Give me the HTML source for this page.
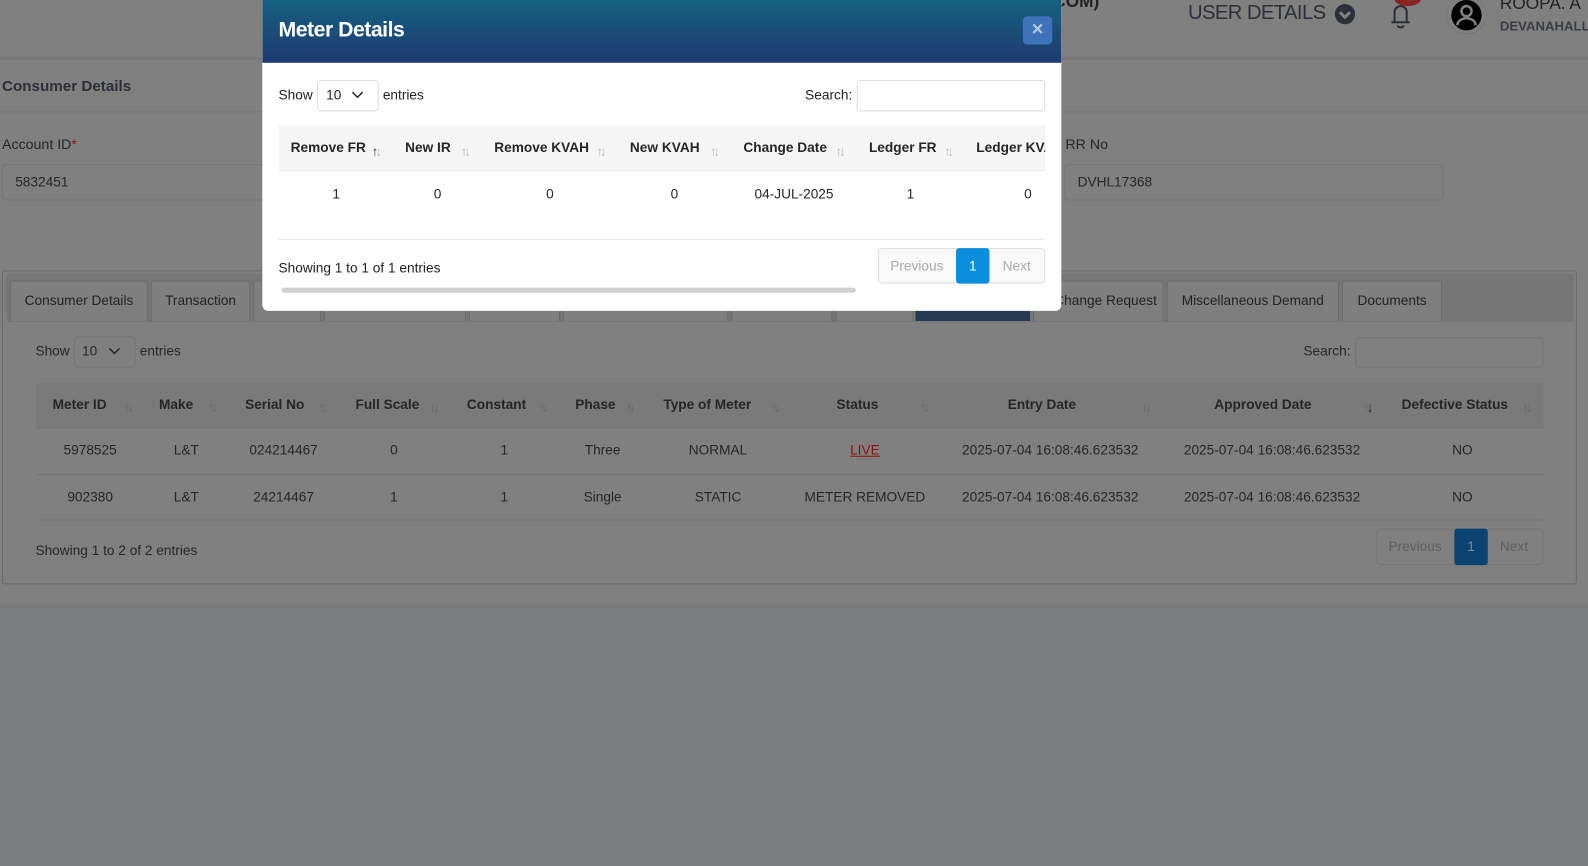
<!DOCTYPE html>
<html><head><meta charset="utf-8"><style>
*{box-sizing:border-box;margin:0;padding:0}
html,body{width:1588px;height:866px;overflow:hidden;background:#7a7b7d;font-family:"Liberation Sans",sans-serif;font-size:13.5px;color:#262626}
#w{position:absolute;left:0;top:0;width:1568px;height:855px;transform:scale(1.01276);transform-origin:0 0}
.a{position:absolute;white-space:nowrap}
.c{position:absolute;text-align:center;white-space:nowrap}
.b{font-weight:bold}
.inp{position:absolute;border:1px solid #747474;border-radius:4px}
.tab{position:absolute;top:277px;height:40px;border:1px solid #6a6a6a;border-bottom:none;border-radius:3px 3px 0 0;background:#7f7f7f;line-height:38px;text-align:center;color:#232323}
.s{position:absolute;font-size:13px;color:#6a6a6a;letter-spacing:-3px}
.ms{position:absolute;font-size:13px;color:#bbb;letter-spacing:-3px}
</style></head><body><div id="w">
<div class="a" style="left:0;top:0;width:1568px;height:598px;background:#808080"></div>
<div class="a" style="left:0;top:57px;width:1568px;height:2px;background:#767676"></div>
<div class="a" style="left:0;top:110px;width:1568px;height:1px;background:#777"></div>
<div class="a" style="left:0;top:596px;width:1568px;height:3px;background:#7c7c7c"></div>
<div class="a b" style="left:1040px;top:-8px;font-size:17px;color:#222">COM)</div>
<div class="a" style="left:1173px;top:2px;font-size:20px;letter-spacing:-0.6px;color:#2d2f36">USER DETAILS</div>
<div class="a" style="left:1318px;top:4px;width:20px;height:20px;border-radius:50%;background:#2d2f36"><svg width="20" height="20"><path d="M5 8l5 5 5-5" stroke="#808080" stroke-width="3" fill="none"/></svg></div>
<svg class="a" style="left:1368px;top:0" width="30" height="30"><path d="M6 22h18M9 22V12a6 6 0 0 1 12 0v10M12 25a3 2 0 0 0 6 0" stroke="#2d2f36" stroke-width="2" fill="none"/></svg>
<div class="a" style="left:1377px;top:-8px;width:26px;height:14px;border-radius:50%;background:#8a2424"></div>
<div class="a" style="left:1428px;top:-4px;width:40px;height:38px;border-radius:50%;border:1px solid #777"></div>
<svg class="a" style="left:1432px;top:-1px" width="32" height="32"><circle cx="16" cy="16" r="15" fill="#000"/><circle cx="16" cy="12" r="5" stroke="#808080" stroke-width="2.5" fill="none"/><path d="M7 26a9 7 0 0 1 18 0" stroke="#808080" stroke-width="2.5" fill="none"/></svg>
<div class="a" style="left:1481px;top:-6px;font-size:17px;color:#222">ROOPA. A</div>
<div class="a b" style="left:1481px;top:18px;font-size:13px;color:#3a3c44">DEVANAHALLI</div>
<div class="a b" style="left:2px;top:77px;font-size:15px;color:#2d2f36">Consumer Details</div>
<div class="a" style="left:2px;top:134px;font-size:14px">Account ID<span style="color:#8a1010">*</span></div>
<div class="inp" style="left:2px;top:162px;width:270px;height:36px"></div>
<div class="a" style="left:15px;top:172px">5832451</div>
<div class="a" style="left:1052px;top:134px;font-size:14px">RR No</div>
<div class="inp" style="left:1051px;top:162px;width:374px;height:36px"></div>
<div class="a" style="left:1064px;top:172px">DVHL17368</div>
<div class="a" style="left:2px;top:267px;width:1555px;height:310px;border:1px solid #6a6a6a;border-radius:3px"></div>
<div class="a" style="left:6px;top:270px;width:1548px;height:48px;background:#767676;border-radius:3px"></div>
<div class="tab" style="left:10px;width:136px">Consumer Details</div>
<div class="tab" style="left:149px;width:98px">Transaction</div>
<div class="tab" style="left:250px;width:67px"></div>
<div class="tab" style="left:320px;width:140px"></div>
<div class="tab" style="left:463px;width:90px"></div>
<div class="tab" style="left:556px;width:163px"></div>
<div class="tab" style="left:722px;width:100px"></div>
<div class="tab" style="left:825px;width:77px"></div>
<div class="tab" style="left:904px;width:113px;background:#263a52;border-color:#1d3557"></div>
<div class="tab" style="left:1020px;width:129px;text-align:left;padding-left:20px">Change Request</div>
<div class="tab" style="left:1152px;width:170px">Miscellaneous Demand</div>
<div class="tab" style="left:1325px;width:99px">Documents</div>
<div class="a" style="left:35px;top:339px">Show</div>
<div class="inp" style="left:73px;top:332px;width:61px;height:31px"></div>
<div class="a" style="left:81px;top:339px">10</div>
<svg class="a" style="left:107px;top:342px" width="12" height="10"><path d="M1 2l5 5 5-5" stroke="#262626" stroke-width="1.5" fill="none"/></svg>
<div class="a" style="left:138px;top:339px">entries</div>
<div class="a" style="left:1287px;top:339px">Search:</div>
<div class="inp" style="left:1338px;top:333px;width:186px;height:30px"></div>
<div class="a" style="left:36px;top:378px;width:1488px;height:45px;background:#7a7a7a;border-bottom:1px solid #737373"></div>
<div class="a" style="left:36px;top:468px;width:1488px;height:1px;background:#747474"></div>
<div class="a" style="left:36px;top:513px;width:1488px;height:1px;background:#747474"></div>
<div class="a b" style="left:52px;top:392px">Meter ID</div><div class="s" style="left:122px;top:395px">↑↓</div>
<div class="a b" style="left:157px;top:392px">Make</div><div class="s" style="left:205px;top:395px">↑↓</div>
<div class="a b" style="left:242px;top:392px">Serial No</div><div class="s" style="left:314px;top:395px">↑↓</div>
<div class="a b" style="left:351px;top:392px">Full Scale</div><div class="s" style="left:424px;top:395px">↑↓</div>
<div class="a b" style="left:461px;top:392px">Constant</div><div class="s" style="left:532px;top:395px">↑↓</div>
<div class="a b" style="left:568px;top:392px">Phase</div><div class="s" style="left:618px;top:395px">↑↓</div>
<div class="a b" style="left:655px;top:392px">Type of Meter</div><div class="s" style="left:761px;top:395px">↑↓</div>
<div class="a b" style="left:826px;top:392px">Status</div><div class="s" style="left:908px;top:395px">↑↓</div>
<div class="a b" style="left:995px;top:392px">Entry Date</div><div class="s" style="left:1127px;top:395px">↑↓</div>
<div class="a b" style="left:1199px;top:392px">Approved Date</div><div class="s" style="left:1346px;top:395px;color:#6a6a6a">↑<span style="color:#222">↓</span></div>
<div class="a b" style="left:1384px;top:392px">Defective Status</div><div class="s" style="left:1503px;top:395px">↑↓</div>
<div class="c" style="left:39px;width:100px;top:437px">5978525</div>
<div class="c" style="left:134px;width:100px;top:437px">L&amp;T</div>
<div class="c" style="left:230px;width:100px;top:437px">024214467</div>
<div class="c" style="left:339px;width:100px;top:437px">0</div>
<div class="c" style="left:448px;width:100px;top:437px">1</div>
<div class="c" style="left:545px;width:100px;top:437px">Three</div>
<div class="c" style="left:639px;width:140px;top:437px">NORMAL</div>
<div class="c" style="left:784px;width:140px;top:437px;color:#8a1010;text-decoration:underline">LIVE</div>
<div class="c" style="left:937px;width:200px;top:437px">2025-07-04 16:08:46.623532</div>
<div class="c" style="left:1156px;width:200px;top:437px">2025-07-04 16:08:46.623532</div>
<div class="c" style="left:1394px;width:100px;top:437px">NO</div>
<div class="c" style="left:39px;width:100px;top:483px">902380</div>
<div class="c" style="left:134px;width:100px;top:483px">L&amp;T</div>
<div class="c" style="left:230px;width:100px;top:483px">24214467</div>
<div class="c" style="left:339px;width:100px;top:483px">1</div>
<div class="c" style="left:448px;width:100px;top:483px">1</div>
<div class="c" style="left:545px;width:100px;top:483px">Single</div>
<div class="c" style="left:639px;width:140px;top:483px">STATIC</div>
<div class="c" style="left:774px;width:160px;top:483px">METER REMOVED</div>
<div class="c" style="left:937px;width:200px;top:483px">2025-07-04 16:08:46.623532</div>
<div class="c" style="left:1156px;width:200px;top:483px">2025-07-04 16:08:46.623532</div>
<div class="c" style="left:1394px;width:100px;top:483px">NO</div>
<div class="a" style="left:35px;top:536px">Showing 1 to 2 of 2 entries</div>
<div class="a" style="left:1359px;top:522px;width:165px;height:36px;border:1px solid #747474;border-radius:4px"></div>
<div class="a" style="left:1371px;top:532px;color:#5e5e5e">Previous</div>
<div class="a" style="left:1436px;top:522px;width:33px;height:36px;background:#0b4470;border-radius:3px;color:#7f8a95;text-align:center;line-height:36px">1</div>
<div class="a" style="left:1481px;top:532px;color:#5e5e5e">Next</div>
<div class="a" style="left:259px;top:0;width:789px;height:307px;background:#fff;border-radius:0 0 6px 6px;overflow:hidden">
 <div class="a" style="left:0;top:0;width:789px;height:62px;background:linear-gradient(#156181,#1f3a70)"></div>
 <div class="a b" style="left:16px;top:18px;font-size:21px;color:#fff;letter-spacing:-0.5px">Meter Details</div>
 <div class="a b" style="left:751px;top:16px;width:29px;height:28px;background:#3f72b8;border-radius:4px;color:#b5c8e4;text-align:center;line-height:27px;font-size:20px">×</div>
 <div class="a" style="left:16px;top:86px;color:#222">Show</div>
 <div class="a" style="left:54px;top:79px;width:61px;height:31px;border:1px solid #ddd;border-radius:4px"></div>
 <div class="a" style="left:63px;top:86px;color:#222">10</div>
 <svg class="a" style="left:88px;top:89px" width="12" height="10"><path d="M1 2l5 5 5-5" stroke="#222" stroke-width="1.5" fill="none"/></svg>
 <div class="a" style="left:119px;top:86px;color:#222">entries</div>
 <div class="a" style="left:536px;top:86px;color:#222">Search:</div>
 <div class="a" style="left:587px;top:79px;width:186px;height:31px;border:1px solid #ddd;border-radius:3px"></div>
 <div class="a" style="left:16px;top:124px;width:757px;height:45px;background:#f5f5f5;border-bottom:1px solid #e6e6e6"></div>
 <div class="a b" style="left:28px;top:138px">Remove FR</div><div class="ms" style="left:108px;top:142px;color:#333">↑<span style="color:#bbb">↓</span></div>
 <div class="a b" style="left:141px;top:138px">New IR</div><div class="ms" style="left:196px;top:142px">↑↓</div>
 <div class="a b" style="left:229px;top:138px">Remove KVAH</div><div class="ms" style="left:330px;top:142px">↑↓</div>
 <div class="a b" style="left:363px;top:138px">New KVAH</div><div class="ms" style="left:442px;top:142px">↑↓</div>
 <div class="a b" style="left:475px;top:138px">Change Date</div><div class="ms" style="left:566px;top:142px">↑↓</div>
 <div class="a b" style="left:599px;top:138px">Ledger FR</div><div class="ms" style="left:673px;top:142px">↑↓</div>
 <div class="a" style="left:705px;top:124px;width:68px;height:45px;overflow:hidden"><div class="a b" style="left:0;top:14px">Ledger KVAH</div></div>
 <div class="c" style="left:23px;width:100px;top:184px">1</div>
 <div class="c" style="left:123px;width:100px;top:184px">0</div>
 <div class="c" style="left:234px;width:100px;top:184px">0</div>
 <div class="c" style="left:357px;width:100px;top:184px">0</div>
 <div class="c" style="left:465px;width:120px;top:184px">04-JUL-2025</div>
 <div class="c" style="left:590px;width:100px;top:184px">1</div>
 <div class="c" style="left:706px;width:100px;top:184px">0</div>
 <div class="a" style="left:16px;top:236px;width:757px;height:1px;background:#e6e6e6"></div>
 <div class="a" style="left:16px;top:257px;color:#222">Showing 1 to 1 of 1 entries</div>
 <div class="a" style="left:608px;top:245px;width:165px;height:35px;border:1px solid #ddd;border-radius:4px;background:#f9f9f9"></div>
 <div class="a" style="left:620px;top:255px;color:#a9a9a9">Previous</div>
 <div class="a" style="left:685px;top:245px;width:33px;height:35px;background:#0a8ddd;border-radius:3px;color:#fff;text-align:center;line-height:35px">1</div>
 <div class="a" style="left:731px;top:255px;color:#a9a9a9">Next</div>
 <div class="a" style="left:19px;top:284px;width:567px;height:5px;background:#d0d0d0;border-radius:3px"></div>
</div>
</div></body></html>
